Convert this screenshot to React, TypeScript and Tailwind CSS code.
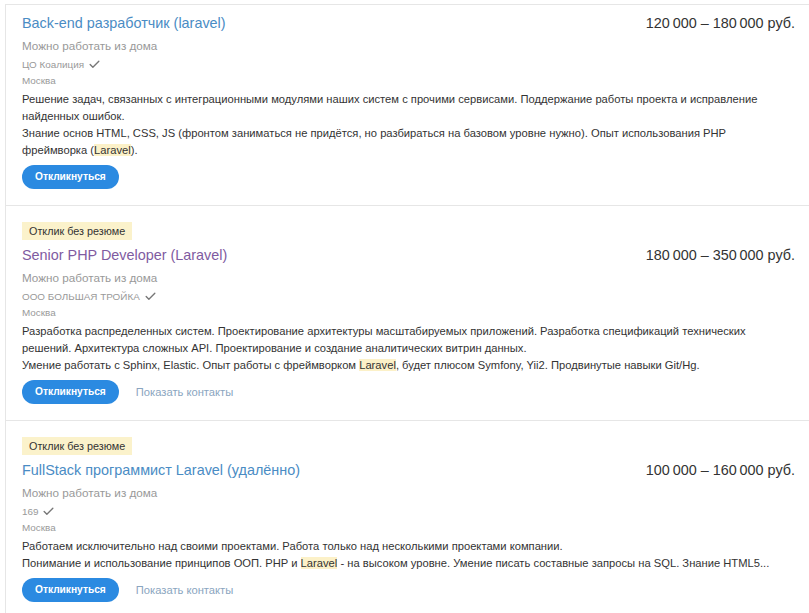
import React from 'react';
import { Check } from 'lucide-react';

type Vacancy = {
  title: string;
  visited?: boolean;
  salary: string;
  company: string;
  noResume?: boolean;
  showContacts?: boolean;
  desc: React.ReactNode[];
};

const Hl = ({ children }: { children: React.ReactNode }) => (
  <span className="bg-[#fcf1c8]">{children}</span>
);

const vacancies: Vacancy[] = [
  {
    title: 'Back-end разработчик (laravel)',
    salary: '120\u202f000 – 180\u202f000 руб.',
    company: 'ЦО Коалиция',
    desc: [
      'Решение задач, связанных с интеграционными модулями наших систем с прочими сервисами. Поддержание работы проекта и исправление найденных ошибок.',
      <>
        Знание основ HTML, CSS, JS (фронтом заниматься не придётся, но разбираться на базовом уровне нужно). Опыт использования PHP
        <br />
        фреймворка (<Hl>Laravel</Hl>).
      </>,
    ],
  },
  {
    title: 'Senior PHP Developer (Laravel)',
    visited: true,
    salary: '180\u202f000 – 350\u202f000 руб.',
    company: 'ООО БОЛЬШАЯ ТРОЙКА',
    noResume: true,
    showContacts: true,
    desc: [
      'Разработка распределенных систем. Проектирование архитектуры масштабируемых приложений. Разработка спецификаций технических решений. Архитектура сложных API. Проектирование и создание аналитических витрин данных.',
      <>
        Умение работать с Sphinx, Elastic. Опыт работы с фреймворком <Hl>Laravel</Hl>, будет плюсом Symfony, Yii2. Продвинутые навыки Git/Hg.
      </>,
    ],
  },
  {
    title: 'FullStack программист Laravel (удалённо)',
    salary: '100\u202f000 – 160\u202f000 руб.',
    company: '169',
    noResume: true,
    showContacts: true,
    desc: [
      'Работаем исключительно над своими проектами. Работа только над несколькими проектами компании.',
      <>
        Понимание и использование принципов ООП. PHP и <Hl>Laravel</Hl> - на высоком уровне. Умение писать составные запросы на SQL. Знание HTML5...
      </>,
    ],
  },
];

const VacancyItem = ({ v, first }: { v: Vacancy; first?: boolean }) => (
  <div className={`border-b border-[#e6e6e6] pl-4 pr-[14px] pb-[16px] ${first ? 'pt-[8px]' : 'pt-[16px]'}`}>
    {v.noResume && (
      <div className="mb-[5px] flex">
        <span className="h-[18px] bg-[#fbf2cb] px-[7px] text-[10.8px] leading-[18px] text-[#333]">
          Отклик без резюме
        </span>
      </div>
    )}
    <div className="flex items-start justify-between">
      <a className={`text-[14.4px] leading-[20px] ${v.visited ? 'text-[#7f5ba1]' : 'text-[#4a8cc4]'}`}>
        {v.title}
      </a>
      <div className="text-[14.4px] leading-[20px] text-[#333]">{v.salary}</div>
    </div>
    <div className="mt-[3px] text-[11.7px] leading-[20px] text-[#999]">Можно работать из дома</div>
    <div className="flex items-center gap-1 text-[9.9px] leading-[17px] text-[#999]">
      {v.company}
      <Check className="h-[13px] w-[13px] text-[#777]" strokeWidth={2.5} />
    </div>
    <div className="text-[9.9px] leading-[16px] text-[#999]">Москва</div>
    <div className="mt-[2px] text-[11.2px] leading-[17px] text-[#333]">
      {v.desc.map((d, i) => (
        <div key={i}>{d}</div>
      ))}
    </div>
    <div className="mt-[6px] flex items-center gap-[17px]">
      <button className="h-6 rounded-full bg-[#2b8ae1] px-[13px] text-[10.2px] font-bold leading-6 text-white">
        Откликнуться
      </button>
      {v.showContacts && <span className="text-[11.2px] text-[#8aa5c0]">Показать контакты</span>}
    </div>
  </div>
);

export default function App() {
  return (
    <div className="min-h-screen bg-white font-['Liberation_Sans',Arial,sans-serif]">
      <div className="ml-[5px] mt-[4px] border-l border-t border-[#e6e6e6]">
        {vacancies.map((v, i) => (
          <VacancyItem key={i} v={v} first={i === 0} />
        ))}
      </div>
    </div>
  );
}
